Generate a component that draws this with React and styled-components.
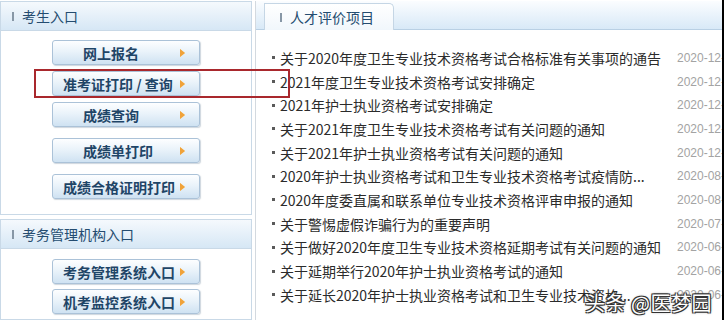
import React from 'react';
import styled, { createGlobalStyle } from 'styled-components';

const GlobalStyle = createGlobalStyle`
  html, body {
    margin: 0;
    padding: 0;
    background: #ffffff;
    overflow: hidden;
  }
  body {
    font-family: "Noto Sans CJK SC", "Noto Sans", sans-serif;
  }
`;

const Page = styled.div`
  position: relative;
  box-sizing: border-box;
  width: 724px;
  height: 320px;
  padding-top: 1px;
  display: flex;
  overflow: hidden;
  border-right: 2px solid #000;
`;

const LeftColumn = styled.div`
  width: 252px;
  flex: none;
  display: flex;
  flex-direction: column;
  gap: 4px;
`;

const Panel = styled.div`
  box-sizing: border-box;
  border: 1px solid #c9d9e7;
  background: #fff;
  flex: ${props => (props.$grow ? '1' : 'none')};
`;

const PanelHeader = styled.div`
  height: 28px;
  display: flex;
  align-items: center;
  padding-left: 11px;
  background: linear-gradient(#f5f9fd, #d6e7f5);
  border-bottom: 1px solid #c9d9e7;
  color: #244c70;
  font-size: 14px;
  line-height: 1;
`;

const HeaderMark = styled.span`
  width: 2px;
  height: 9px;
  background: #8797a6;
  margin-right: 8px;
  flex: none;
`;

const ButtonList = styled.div`
  display: flex;
  flex-direction: column;
  align-items: flex-start;
  padding: ${props => props.$pad};
  padding-left: 51px;
  gap: ${props => props.$gap}px;
`;

const EntryButton = styled.div`
  box-sizing: border-box;
  width: 148px;
  height: 25px;
  margin-top: ${props => props.$extra || 0}px;
  display: flex;
  align-items: center;
  padding-left: ${props => props.$indent}px;
  border: 1px solid #abc2d8;
  border-radius: 3px;
  background: linear-gradient(#fdfeff 0%, #eaf3fa 45%, #cfe2f2 100%);
  box-shadow: 1px 1px 1px rgba(60, 90, 120, 0.25);
  color: #1f4567;
  font-size: 14px;
  font-weight: 700;
  white-space: nowrap;
  cursor: pointer;
`;

const Arrow = styled.span`
  margin-left: auto;
  margin-right: 14px;
  width: 0;
  height: 0;
  border-top: 4px solid transparent;
  border-bottom: 4px solid transparent;
  border-left: 5px solid #f0a23a;
  filter: drop-shadow(0 0 0.5px #f7d58a);
`;

const RightColumn = styled.div`
  flex: 1;
  margin-left: 3px;
  border-left: 1px solid #d3d9df;
  display: flex;
  flex-direction: column;
  min-width: 0;
`;

const TabBar = styled.div`
  height: 28px;
  display: flex;
  align-items: flex-end;
  padding-left: 8px;
  background: linear-gradient(#fbfdff, #d8e9f7);
  border-bottom: 1px solid #b9d0e4;
`;

const Tab = styled.div`
  box-sizing: border-box;
  width: 130px;
  height: 27px;
  margin-bottom: -1px;
  display: flex;
  align-items: center;
  padding-left: 15px;
  border: 1px solid #c5d6e5;
  border-bottom: none;
  border-top-right-radius: 5px;
  background: linear-gradient(#ffffff, #f1f7fc);
  color: #244c70;
  font-size: 14px;
  line-height: 1;
`;

const NewsList = styled.ul`
  list-style: none;
  margin: 0;
  padding: 16px 0 0 16px;
`;

const NewsRow = styled.li`
  display: grid;
  grid-template-columns: 3px 392px auto;
  column-gap: 5px;
  align-items: center;
  height: 23.7px;
  white-space: nowrap;
`;

const Bullet = styled.span`
  width: 3px;
  height: 3px;
  background: #5a5a5a;
`;

const NewsTitle = styled.span`
  color: #2b2b2b;
  font-size: 14px;
  overflow: hidden;
`;

const NewsDate = styled.span`
  color: #a3a3a3;
  font-family: "Liberation Sans", sans-serif;
  font-size: 12px;
`;

const Highlight = styled.div`
  position: absolute;
  left: 34px;
  top: 69px;
  width: 256px;
  height: 29px;
  box-sizing: border-box;
  border: 2px solid #a9282d;
  pointer-events: none;
`;

const Watermark = styled.div`
  position: absolute;
  right: 10px;
  bottom: 7px;
  color: #fff;
  font-size: 20px;
  line-height: 1;
  letter-spacing: 0.5px;
  text-shadow:
    -1px -1px 0 #333, 1px -1px 0 #333, -1px 1px 0 #333, 1px 1px 0 #333,
    0 0 3px rgba(0, 0, 0, 0.6);
`;

const examButtons = [
  { label: '网上报名', indent: 30 },
  { label: '准考证打印 / 查询', indent: 10 },
  { label: '成绩查询', indent: 30 },
  { label: '成绩单打印', indent: 30, extra: 5 },
  { label: '成绩合格证明打印', indent: 10, extra: 5 }
];

const adminButtons = [
  { label: '考务管理系统入口', indent: 10 },
  { label: '机考监控系统入口', indent: 10 }
];

const news = [
  { title: '关于2020年度卫生专业技术资格考试合格标准有关事项的通告', date: '2020-12-18' },
  { title: '2021年度卫生专业技术资格考试安排确定', date: '2020-12-11' },
  { title: '2021年护士执业资格考试安排确定', date: '2020-12-11' },
  { title: '关于2021年度卫生专业技术资格考试有关问题的通知', date: '2020-12-11' },
  { title: '关于2021年护士执业资格考试有关问题的通知', date: '2020-12-11' },
  { title: '2020年护士执业资格考试和卫生专业技术资格考试疫情防...', date: '2020-08-28' },
  { title: '2020年度委直属和联系单位专业技术资格评审申报的通知', date: '2020-08-10' },
  { title: '关于警惕虚假诈骗行为的重要声明', date: '2020-07-14' },
  { title: '关于做好2020年度卫生专业技术资格延期考试有关问题的通知', date: '2020-06-24' },
  { title: '关于延期举行2020年护士执业资格考试的通知', date: '2020-06-10' },
  { title: '关于延长2020年护士执业资格考试和卫生专业技术资格...', date: '2020-06-01' }
];

export default function App () {
  return (
    <>
      <GlobalStyle />
      <Page>
        <LeftColumn>
          <Panel>
            <PanelHeader><HeaderMark />考生入口</PanelHeader>
            <ButtonList $pad='9px 0 15px' $gap={6}>
              {examButtons.map(btn => (
                <EntryButton key={btn.label} $indent={btn.indent} $extra={btn.extra}>
                  {btn.label}
                  <Arrow />
                </EntryButton>
              ))}
            </ButtonList>
          </Panel>
          <Panel $grow>
            <PanelHeader><HeaderMark />考务管理机构入口</PanelHeader>
            <ButtonList $pad='10px 0 0' $gap={5}>
              {adminButtons.map(btn => (
                <EntryButton key={btn.label} $indent={btn.indent}>
                  {btn.label}
                  <Arrow />
                </EntryButton>
              ))}
            </ButtonList>
          </Panel>
        </LeftColumn>
        <RightColumn>
          <TabBar>
            <Tab><HeaderMark />人才评价项目</Tab>
          </TabBar>
          <NewsList>
            {news.map((item, index) => (
              <NewsRow key={`news-${index}`}>
                <Bullet />
                <NewsTitle>{item.title}</NewsTitle>
                <NewsDate>{item.date}</NewsDate>
              </NewsRow>
            ))}
          </NewsList>
        </RightColumn>
        <Highlight />
        <Watermark>头条 @医梦园</Watermark>
      </Page>
    </>
  );
}
